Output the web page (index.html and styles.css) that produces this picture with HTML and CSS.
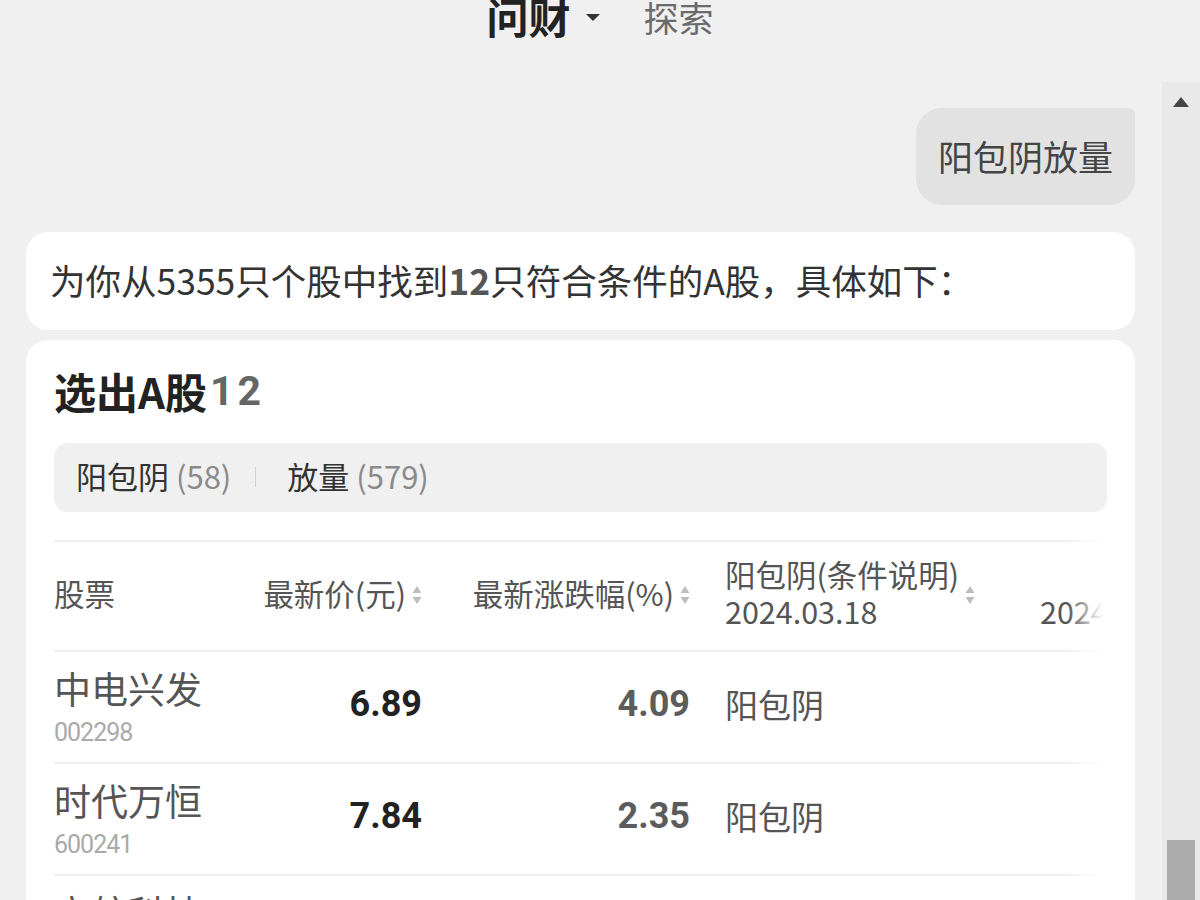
FILE: index.html
```html
<!DOCTYPE html>
<html lang="zh-CN">
<head>
<meta charset="utf-8">
<title>问财</title>
<link rel="stylesheet" href="styles.css">
</head>
<body>
<header class="top">
  <div class="tab tab-active">问财<span class="caret"></span></div>
  <div class="tab tab-muted">探索</div>
</header>
<div class="viewport">
  <main class="chat">
    <div class="user-row">
      <div class="bubble-user">阳包阴放量</div>
    </div>
    <div class="card card-answer">为你从5355只个股中找到<b>12</b>只符合条件的A股，具体如下：</div>
    <div class="card card-result">
      <h2 class="result-title">选出A股<span class="result-count">12</span></h2>
      <div class="filters">
        <span class="filter"><span class="filter-name">阳包阴</span> <span class="filter-num">(58)</span></span>
        <span class="filter-sep"></span>
        <span class="filter"><span class="filter-name">放量</span> <span class="filter-num">(579)</span></span>
      </div>
      <div class="table-wrap">
        <table class="stocks">
          <thead>
            <tr>
              <th class="col-name">股票</th>
              <th class="col-price"><span class="th-in">最新价(元)<svg class="sort" viewBox="0 0 10 20" width="10" height="20"><path d="M5 1 L9.5 8 L0.5 8 Z M0.5 12 L9.5 12 L5 19 Z" fill="#bdbdbd"/></svg></span></th>
              <th class="col-chg"><span class="th-in">最新涨跌幅(%)<svg class="sort" viewBox="0 0 10 20" width="10" height="20"><path d="M5 1 L9.5 8 L0.5 8 Z M0.5 12 L9.5 12 L5 19 Z" fill="#bdbdbd"/></svg></span></th>
              <th class="col-cond"><span class="th-in th-left"><span class="th-lines"><span>阳包阴(条件说明)</span><span>2024.03.18</span></span><svg class="sort" viewBox="0 0 10 20" width="10" height="20"><path d="M5 1 L9.5 8 L0.5 8 Z M0.5 12 L9.5 12 L5 19 Z" fill="#bdbdbd"/></svg></span></th>
              <th class="col-next"><span class="th-lines"><span>&nbsp;</span><span>2024.03.18</span></span></th>
            </tr>
          </thead>
          <tbody>
            <tr>
              <td class="col-name"><div class="stock-name">中电兴发</div><div class="stock-code">002298</div></td>
              <td class="col-price num-strong">6.89</td>
              <td class="col-chg num">4.09</td>
              <td class="col-cond cond">阳包阴</td>
              <td class="col-next"></td>
            </tr>
            <tr>
              <td class="col-name"><div class="stock-name">时代万恒</div><div class="stock-code">600241</div></td>
              <td class="col-price num-strong">7.84</td>
              <td class="col-chg num">2.35</td>
              <td class="col-cond cond">阳包阴</td>
              <td class="col-next"></td>
            </tr>
            <tr>
              <td class="col-name"><div class="stock-name">立航科技</div><div class="stock-code">603261</div></td>
              <td class="col-price num-strong">30.12</td>
              <td class="col-chg num">1.86</td>
              <td class="col-cond cond">阳包阴</td>
              <td class="col-next"></td>
            </tr>
          </tbody>
        </table>
        <div class="fade"></div>
      </div>
    </div>
  </main>
  <aside class="scrollbar">
    <span class="scroll-arrow"></span>
    <span class="scroll-thumb"></span>
  </aside>
</div>
</body>
</html>
```
FILE: styles.css
```css
* { box-sizing: border-box; }
html, body {
  margin: 0;
  padding: 0;
  height: 100%;
  overflow: hidden;
}
body {
  background: #f0f0f0;
  font-family: "Noto Sans CJK SC", "Noto Sans", sans-serif;
  color: #333;
}

.top {
  height: 82px;
  display: flex;
  justify-content: center;
  align-items: flex-start;
  gap: 44px;
}
.tab {
  display: flex;
  align-items: center;
  line-height: 36px;
  height: 36px;
}
.tab-active {
  font-size: 42px;
  font-weight: 700;
  color: #222;
  margin-top: -2px;
}
.tab-muted {
  font-size: 35px;
  color: #6a6a6a;
  margin-top: -1px;
}
.caret {
  width: 0;
  height: 0;
  border-left: 7px solid transparent;
  border-right: 7px solid transparent;
  border-top: 7px solid #333;
  margin-left: 15px;
  margin-top: 2px;
}

.viewport {
  display: flex;
  height: calc(100vh - 82px);
  overflow: hidden;
}
.chat {
  flex: 1;
  padding: 26px 27px 0 26px;
  display: flex;
  flex-direction: column;
  min-width: 0;
}

.user-row {
  display: flex;
  justify-content: flex-end;
}
.bubble-user {
  background: #e2e2e2;
  color: #444;
  font-size: 35px;
  line-height: 49px;
  padding: 23px 22px 25px 22px;
  border-radius: 26px 6px 26px 26px;
}

.card {
  background: #fff;
  border-radius: 22px;
}
.card-answer {
  margin-top: 27px;
  padding: 23px 24px 25px 24px;
  font-size: 35.5px;
  line-height: 50px;
  color: #333;
  white-space: nowrap;
}
.card-answer b {
  font-weight: 700;
  color: #555;
}

.card-result {
  margin-top: 10px;
  padding: 27px 28px 0 28px;
  border-radius: 22px 22px 0 0;
  flex: 1;
}
.result-title {
  margin: 0;
  height: 48px;
  display: flex;
  align-items: center;
  font-size: 42px;
  line-height: 48px;
  font-weight: 700;
  color: #222;
}
.result-count {
  color: #666;
  font-family: "Roboto", "Noto Sans", sans-serif;
  font-size: 41px;
  letter-spacing: 4px;
  margin-left: 3px;
}

.filters {
  margin-top: 28px;
  height: 69px;
  background: #f0f0f0;
  border-radius: 14px;
  display: flex;
  align-items: center;
  padding: 0 22px 5px 22px;
  font-size: 31px;
}
.filter-name { color: #333; }
.filter-num { color: #8a8a8a; }
.filter-sep {
  width: 1px;
  height: 20px;
  background: #d0d0d0;
  margin: 4px 31px 0 24px;
}

.table-wrap {
  position: relative;
  margin-top: 28px;
  overflow: hidden;
}
.stocks {
  border-collapse: collapse;
  width: 1240px;
  table-layout: fixed;
}
.stocks th,
.stocks td {
  border-top: 2px solid #f0f0f0;
  padding: 0;
  vertical-align: middle;
}
.stocks th {
  height: 110px;
  font-weight: 400;
  font-size: 30.5px;
  color: #555;
  line-height: 37px;
  padding-bottom: 6px;
}
.stocks td {
  height: 112px;
}
.col-name { width: 190px; text-align: left; }
.col-price { width: 178px; text-align: right; }
.col-chg { width: 268px; text-align: right; }
.col-cond { width: 320px; text-align: left; padding-left: 35px !important; }
.col-next { width: 284px; text-align: left; padding-left: 30px !important; }

.th-in {
  display: inline-flex;
  align-items: center;
}
.th-in .sort { margin-left: 6px; margin-top: 4px; }
.th-lines {
  display: flex;
  flex-direction: column;
  text-align: left;
}

.stock-name {
  font-size: 37px;
  line-height: 44px;
  color: #555;
}
.stock-code {
  font-family: "Roboto", "Noto Sans", sans-serif;
  font-size: 25px;
  line-height: 32px;
  color: #aaa;
  letter-spacing: -1px;
  margin-top: 7px;
}
.num-strong {
  font-family: "Roboto", "Noto Sans", sans-serif;
  font-weight: 700;
  font-size: 36px;
  color: #222;
  padding-bottom: 6px !important;
}
.num {
  font-family: "Roboto", "Noto Sans", sans-serif;
  font-weight: 700;
  font-size: 36px;
  color: #5c5c5c;
  padding-bottom: 6px !important;
}
.cond {
  font-size: 33px;
  color: #555;
  padding-bottom: 6px !important;
}

.fade {
  position: absolute;
  top: 0;
  right: 0;
  bottom: 0;
  width: 40px;
  background: linear-gradient(to right, rgba(255,255,255,0), #fff 90%);
}

.scrollbar {
  width: 38px;
  flex: 0 0 38px;
  background: #e9e9e9;
  display: flex;
  flex-direction: column;
  align-items: center;
}
.scroll-arrow {
  margin-top: 15px;
  width: 0;
  height: 0;
  border-left: 8px solid transparent;
  border-right: 8px solid transparent;
  border-bottom: 10px solid #444;
}
.scroll-thumb {
  margin-top: auto;
  width: 28px;
  height: 60px;
  background: #acacac;
}
```
